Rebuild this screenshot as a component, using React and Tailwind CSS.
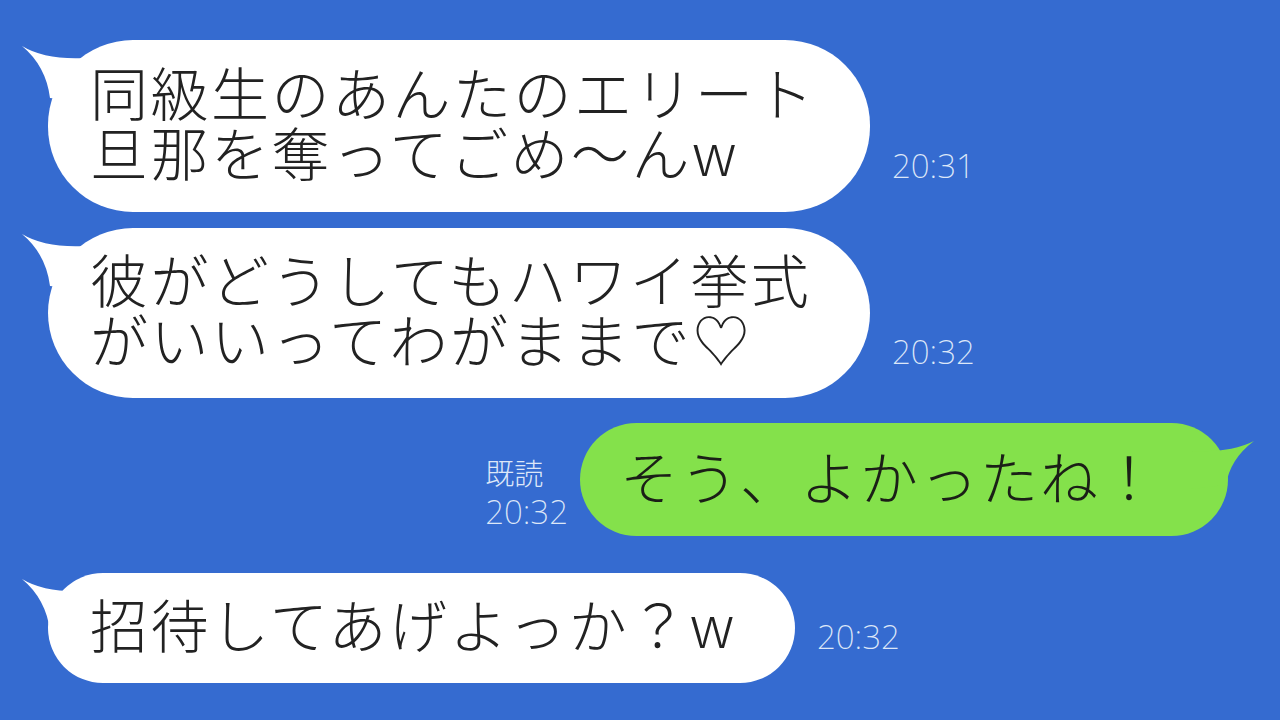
import React from "react";

const jp = { fontFamily: '"Noto Sans CJK JP", "Noto Sans", sans-serif' };
const num = { fontFamily: '"Noto Sans", "Noto Sans CJK JP", sans-serif' };

// little hooked tail on the top-left of incoming bubbles
const LeftTail = ({ fill }) => (
  <svg className="absolute -left-[30px] top-0" width="70" height="70" viewBox="0 0 70 70">
    <path d="M4 6 Q27 20 67 18 L67 62 L32 58 Q28 26 4 6 Z" fill={fill} />
  </svg>
);

// mirrored tail for outgoing bubbles
const RightTail = ({ fill }) => (
  <svg className="absolute -right-[30px] top-0" width="70" height="70" viewBox="0 0 70 70">
    <path d="M66 18 Q43 30 3 28 L3 66 L38 62 Q42 36 66 18 Z" fill={fill} />
  </svg>
);

const Time = ({ children, className = "" }) => (
  <span style={num} className={`text-[33px] font-extralight leading-none text-[#dde7f8] ${className}`}>
    {children}
  </span>
);

const Incoming = ({ lines, time, width, height }) => (
  <div className="flex items-end">
    <div
      style={jp}
      className={`relative flex flex-col justify-center rounded-[85px] bg-white pb-[10px] pl-[42px] text-[58px] font-light leading-[60px] tracking-[2.5px] text-[#222] ${width} ${height}`}
    >
      <LeftTail fill="#ffffff" />
      {lines.map((l) => (
        <span key={l} className="relative block whitespace-nowrap">
          {l}
        </span>
      ))}
    </div>
    <Time className="mb-[30px] ml-[22px]">{time}</Time>
  </div>
);

export default function App() {
  return (
    <div className="flex h-[720px] w-[1280px] flex-col overflow-hidden bg-[#356bd0] pl-[48px] pt-[40px]">
      <Incoming
        lines={["同級生のあんたのエリート", "旦那を奪ってごめ〜んw"]}
        time="20:31"
        width="w-[822px]"
        height="h-[172px]"
      />
      <div className="mt-[16px]">
        <Incoming
          lines={["彼がどうしてもハワイ挙式", "がいいってわがままで♡"]}
          time="20:32"
          width="w-[822px]"
          height="h-[170px]"
        />
      </div>

      <div className="mt-[25px] flex items-end justify-end pr-[52px]">
        <div className="mb-[8px] mr-[12px] flex flex-col gap-[8px]">
          <span style={jp} className="text-[29px] font-extralight leading-none text-[#dde7f8]">
            既読
          </span>
          <Time>20:32</Time>
        </div>
        <div
          style={jp}
          className="relative flex h-[113px] w-[648px] items-center rounded-[60px] bg-[#84e14b] pb-[10px] pl-[40px] text-[58px] font-light leading-[60px] tracking-[2px] text-[#1b1f17]"
        >
          <RightTail fill="#84e14b" />
          <span className="relative block whitespace-nowrap">そう、よかったね！</span>
        </div>
      </div>

      <div className="mt-[37px]">
        <Incoming lines={["招待してあげよっか？w"]} time="20:32" width="w-[747px]" height="h-[110px]" />
      </div>
    </div>
  );
}
